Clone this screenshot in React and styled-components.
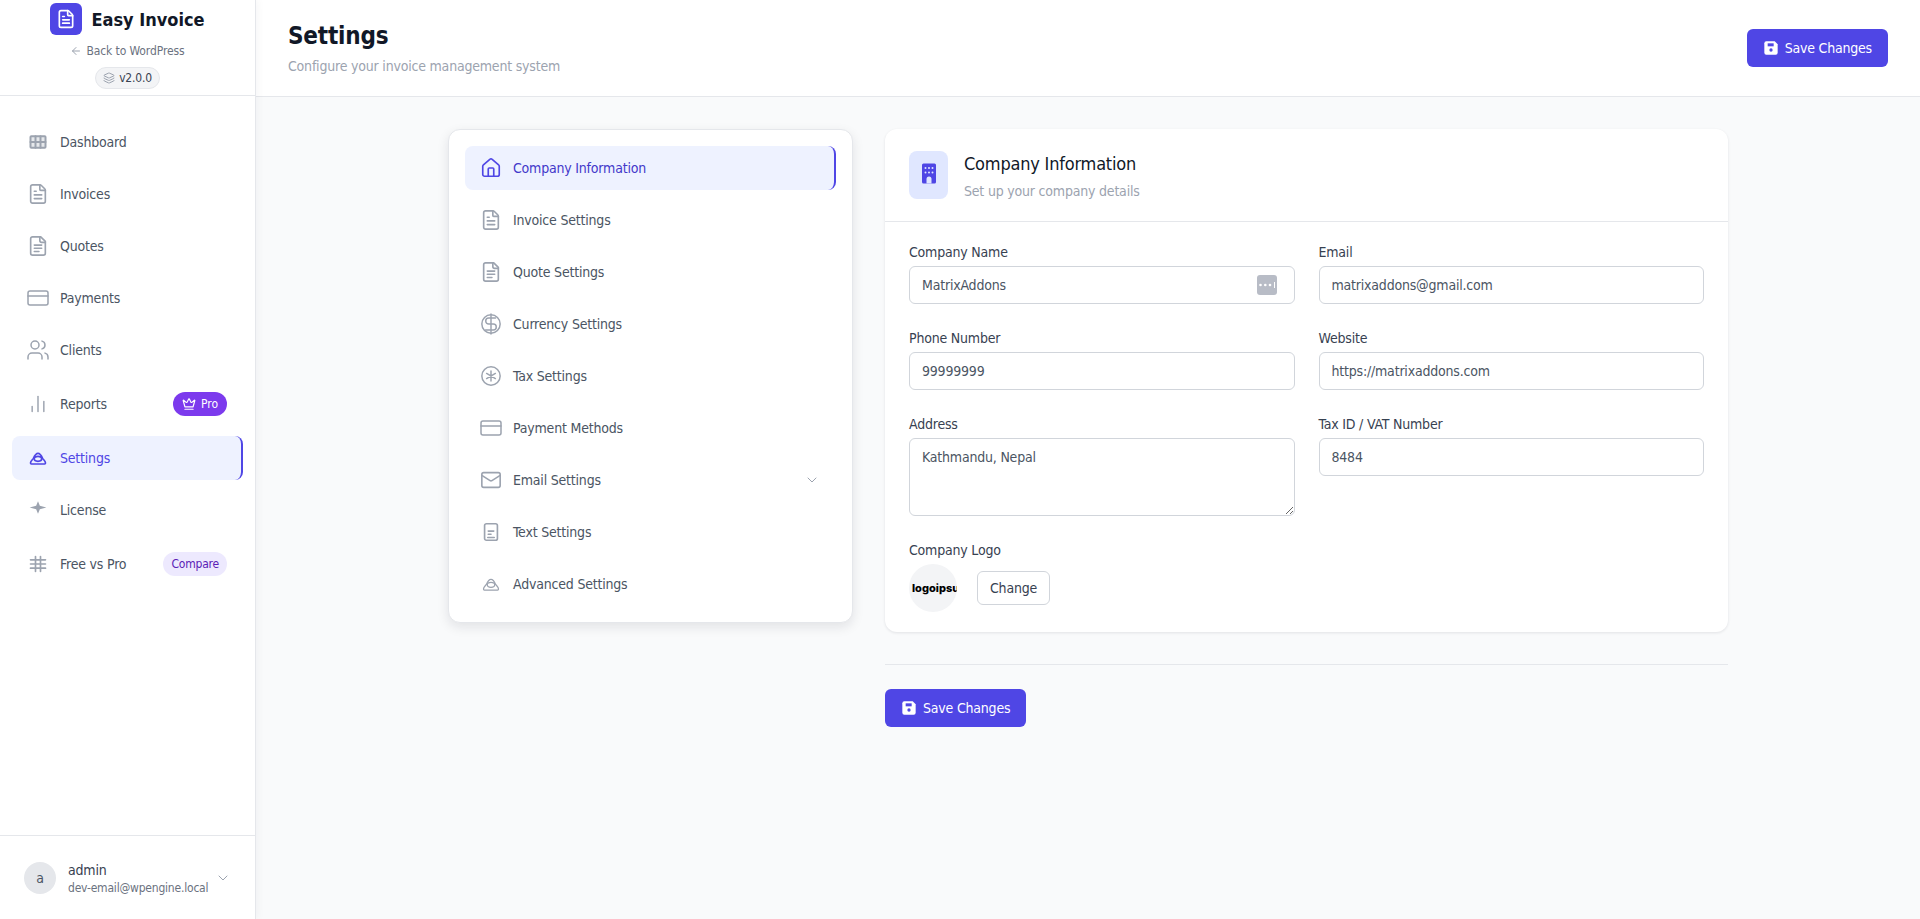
import React from 'react';
import styled, { createGlobalStyle } from 'styled-components';
import {
  ArrowLeft,
  ChartNoAxesColumn,
  ChevronDown,
  CreditCard,
  Crown,
  FileText,
  House,
  Layers,
  Mail,
  Users,
} from 'lucide-react';

const fontStack = '"DejaVu Sans Condensed", "DejaVu Sans", "Liberation Sans", sans-serif';

const GlobalStyle = createGlobalStyle`
  * { box-sizing: border-box; }
  html, body { margin: 0; padding: 0; height: 100%; }
  body {
    font-family: ${fontStack};
    font-stretch: condensed;
    font-size: 14px;
    letter-spacing: -0.2px;
    color: #374151;
    background: #f9fafb;
    overflow: hidden;
  }
  button, input, textarea {
    font-family: ${fontStack};
    font-stretch: condensed;
    font-size: 14px;
    letter-spacing: -0.2px;
  }
`;

const Page = styled.div`
  display: flex;
  height: 919px;
  overflow: hidden;
`;

const Sidebar = styled.aside`
  position: relative;
  z-index: 2;
  flex: 0 0 256px;
  min-width: 0;
  display: flex;
  flex-direction: column;
  background: #fff;
  border-right: 1px solid #e5e7eb;
  box-shadow: 2px 0 8px rgba(17, 24, 39, 0.04);
`;

const Brand = styled.div`
  height: 96px;
  padding-top: 3px;
  border-bottom: 1px solid #e5e7eb;
  display: flex;
  flex-direction: column;
  align-items: center;
`;

const BrandRow = styled.div`
  display: flex;
  align-items: center;
  gap: 9px;
`;

const LogoBox = styled.div`
  width: 32px;
  height: 32px;
  border-radius: 6px;
  background: #4f46e5;
  color: #fff;
  display: flex;
  align-items: center;
  justify-content: center;
`;

const BrandName = styled.div`
  font-size: 18px;
  font-weight: 700;
  letter-spacing: 0;
  color: #111827;
`;

const BackLink = styled.a`
  margin-top: 8px;
  display: flex;
  align-items: center;
  gap: 4px;
  font-size: 12px;
  line-height: 16px;
  letter-spacing: -0.1px;
  color: #6b7280;
  svg { color: #9ca3af; }
`;

const Version = styled.div`
  margin-top: 8px;
  height: 22px;
  padding: 0 7px;
  display: flex;
  align-items: center;
  gap: 4px;
  font-size: 12px;
  color: #374151;
  background: #f3f4f6;
  border: 1px solid #e5e7eb;
  border-radius: 999px;
  svg { color: #9ca3af; }
`;

const Nav = styled.nav`
  flex: 1;
  padding: 24px 12px;
  display: flex;
  flex-direction: column;
  gap: 8px;
`;

const MenuItem = styled.a`
  display: flex;
  align-items: center;
  gap: 12px;
  padding: 12px 16px;
  line-height: 20px;
  font-size: 14px;
  border-radius: 8px;
  color: ${(p) => (p.$active ? p.$accent : '#4b5563')};
  background: ${(p) => (p.$active ? '#eef2ff' : 'transparent')};
  border-right: ${(p) => (p.$active ? '2px solid #4f46e5' : '0')};
`;

const IconSlot = styled.span`
  flex: 0 0 20px;
  width: 20px;
  min-width: 0;
  height: 20px;
  display: flex;
  align-items: center;
  justify-content: center;
  color: ${(p) => (p.$active ? '#4f46e5' : '#9ca3af')};
  svg { flex-shrink: 0; }
`;

const MenuLabel = styled.span`
  flex: 1;
`;

const ProBadge = styled.span`
  height: 24px;
  padding: 0 9px;
  display: flex;
  align-items: center;
  gap: 5px;
  border-radius: 999px;
  font-size: 12px;
  letter-spacing: 0;
  color: #fff;
  background: #7c3aed;
`;

const CompareBadge = styled.span`
  height: 24px;
  padding: 0 8px;
  display: flex;
  align-items: center;
  border-radius: 999px;
  font-size: 12px;
  color: #5b21b6;
  background: #ede9fe;
`;

const UserBar = styled.div`
  height: 84px;
  padding: 0 24px;
  border-top: 1px solid #e5e7eb;
  display: flex;
  align-items: center;
  gap: 12px;
  svg { color: #9ca3af; flex-shrink: 0; }
`;

const Avatar = styled.div`
  flex: 0 0 32px;
  height: 32px;
  border-radius: 50%;
  background: #e5e7eb;
  color: #4b5563;
  display: flex;
  align-items: center;
  justify-content: center;
`;

const UserText = styled.div`
  flex: 1;
  min-width: 0;
  white-space: nowrap;
`;

const UserName = styled.div`
  font-size: 14px;
  line-height: 20px;
  color: #374151;
`;

const UserEmail = styled.div`
  font-size: 12px;
  line-height: 16px;
  color: #6b7280;
`;

const Content = styled.div`
  flex: 1;
  min-width: 0;
  display: flex;
  flex-direction: column;
`;

const Header = styled.header`
  height: 97px;
  padding: 0 32px;
  display: flex;
  align-items: center;
  justify-content: space-between;
  background: #fff;
  border-bottom: 1px solid #e5e7eb;
`;

const PageTitle = styled.h1`
  margin: 0;
  font-size: 24px;
  line-height: 32px;
  font-weight: 700;
  color: #111827;
`;

const PageSub = styled.p`
  margin: 4px 0 0;
  font-size: 14px;
  line-height: 20px;
  color: #9ca3af;
`;

const SaveButton = styled.button`
  height: 38px;
  padding: 0 16px;
  display: inline-flex;
  align-items: center;
  gap: 6px;
  border: 0;
  border-radius: 6px;
  background: #4f46e5;
  color: #fff;
`;

const Main = styled.main`
  flex: 1;
  padding: 32px 0;
`;

const Columns = styled.div`
  width: 1280px;
  margin: 0 auto;
  display: grid;
  grid-template-columns: 405px 1fr;
  gap: 32px;
  align-items: start;
`;

const SideCard = styled.div`
  padding: 16px;
  display: flex;
  flex-direction: column;
  gap: 8px;
  background: #fff;
  border: 1px solid #e5e7eb;
  border-radius: 12px;
  box-shadow: 0 4px 12px rgba(17, 24, 39, 0.1);
`;

const Card = styled.section`
  background: #fff;
  border-radius: 12px;
  box-shadow: 0 1px 3px rgba(17, 24, 39, 0.1);
`;

const CardHead = styled.div`
  padding: 20px 24px;
  display: flex;
  align-items: center;
  gap: 16px;
  border-bottom: 1px solid #e5e7eb;
`;

const HeadIcon = styled.div`
  flex: 0 0 39px;
  height: 48px;
  border-radius: 8px;
  background: #e0e7ff;
  display: flex;
  align-items: center;
  justify-content: center;
`;

const CardTitle = styled.h2`
  margin: 0;
  padding-top: 1px;
  font-size: 18px;
  line-height: 28px;
  font-weight: 400;
  color: #111827;
`;

const CardSub = styled.p`
  margin: 3px 0 0;
  font-size: 14px;
  line-height: 20px;
  color: #9ca3af;
`;

const FormGrid = styled.div`
  padding: 20px 24px;
  display: grid;
  grid-template-columns: 1fr 1fr;
  gap: 24px;
`;

const Field = styled.label`
  display: flex;
  flex-direction: column;
  gap: 4px;
  position: relative;
`;

const FieldLabel = styled.span`
  font-size: 14px;
  line-height: 20px;
  color: #374151;
`;

const TextInput = styled.input`
  height: 38px;
  width: 100%;
  padding: 0 12px;
  border: 1px solid #d1d5db;
  border-radius: 6px;
  background: #fff;
  color: #4b5563;
`;

const TextArea = styled.textarea`
  display: block;
  height: 78px;
  width: 100%;
  padding: 8px 12px;
  border: 1px solid #d1d5db;
  border-radius: 6px;
  background: #fff;
  color: #4b5563;
  line-height: 20px;
`;

const KeyBadge = styled.span`
  position: absolute;
  right: 18px;
  bottom: 9px;
  width: 20px;
  height: 20px;
  border-radius: 3px;
  background: #b8bcc6;
  display: flex;
`;

const LogoField = styled.div`
  grid-column: 1 / -1;
  display: flex;
  flex-direction: column;
  gap: 4px;
`;

const LogoRow = styled.div`
  display: flex;
  align-items: center;
  gap: 20px;
`;

const LogoCircle = styled.div`
  width: 48px;
  height: 48px;
  border-radius: 50%;
  background: #f3f4f6;
  overflow: hidden;
  display: flex;
  align-items: center;
  white-space: nowrap;
  padding-left: 3px;
  font-family: Inter, sans-serif;
  font-size: 11px;
  font-weight: 800;
  letter-spacing: 0;
  color: #000;
`;

const ChangeButton = styled.button`
  height: 34px;
  padding: 0 12px;
  border: 1px solid #d1d5db;
  border-radius: 6px;
  background: #fff;
  color: #374151;
`;

const FormFooter = styled.div`
  margin-top: 32px;
  padding-top: 24px;
  border-top: 1px solid #e5e7eb;
`;

const icon = { width: 20, height: 20, viewBox: '0 0 24 24', fill: 'none', stroke: 'currentColor', strokeWidth: 2, strokeLinecap: 'round', strokeLinejoin: 'round' };

const GridIcon = () => (
  <svg {...icon} strokeWidth={2.4}>
    <rect x="3" y="5" width="18" height="14" rx="1" fill="currentColor" fillOpacity="0.25" />
    <path d="M9 5v14M15 5v14M3 12h18" />
  </svg>
);

const QuoteIcon = () => (
  <svg {...icon} width={22} height={22} strokeWidth={1.8}>
    <path d="M15 2H6a2 2 0 0 0-2 2v16a2 2 0 0 0 2 2h12a2 2 0 0 0 2-2V7Z" />
    <path d="M14 2v4a2 2 0 0 0 2 2h4M8 11h8M8 14.5h8M8 18h5" />
  </svg>
);

const DomeIcon = ({ weight = 2 }) => (
  <svg {...icon} strokeWidth={weight}>
    <path d="M3 18c0-2.5 2-3.5 3.5-5.5C8 9 9.5 6.5 12 6.5s4 2.5 5.5 6C19 14.5 21 15.5 21 18c0 .8-.5 1.2-1 1.2H4c-.5 0-1-.4-1-1.2Z" />
    <ellipse cx="12" cy="13" rx="4.5" ry="3" />
  </svg>
);

const SparkIcon = () => (
  <svg {...icon} fill="currentColor" stroke="none">
    <path d="M12 1.5l2.2 5.3L22 9l-7.800 2.200L12 16.500l-2.200-5.300L2 9l7.800-2.200Z" />
  </svg>
);

const DoubleHashIcon = () => (
  <svg {...icon}>
    <path d="M9 3v18M15 3v18M3 7h18M3 12h18M3 17h18" />
  </svg>
);

const DollarCircleIcon = () => (
  <svg {...icon} width={22} height={22} strokeWidth={1.6}>
    <circle cx="12" cy="12" r="10" />
    <path d="M12 1v22M17 5.5H9.5a3.25 3.25 0 0 0 0 6.5h5a3.25 3.25 0 0 1 0 6.5H6" />
  </svg>
);

const AsteriskCircleIcon = () => (
  <svg {...icon} width={22} height={22} strokeWidth={1.6}>
    <circle cx="12" cy="12" r="10" />
    <path d="M12 6.5v11M7.2 9.2l9.6 5.6M16.8 9.2l-9.6 5.6" />
  </svg>
);

const TextFileIcon = () => (
  <svg {...icon} width={22} height={22} strokeWidth={1.8}>
    <rect x="5" y="3" width="14" height="18" rx="2" />
    <path d="M9 11h6M9 14.5h3M8.5 18h7" />
  </svg>
);

const BuildingIcon = () => (
  <svg width="24" height="24" viewBox="0 0 24 24">
    <rect x="5" y="0.5" width="14" height="20" rx="1.5" fill="#4f46e5" />
    {[5, 9.5].map((y) => [8.5, 12, 15.5].map((x) => <circle key={`${x}-${y}`} cx={x} cy={y} r="1" fill="#e0e7ff" />))}
    <path d="M9.5 20.5V16a2.5 2.5 0 0 1 5 0v4.5Z" fill="#e0e7ff" />
  </svg>
);

const SaveIcon = () => (
  <svg width="16" height="16" viewBox="0 0 24 24">
    <path d="M5 2h12.5L22 6.5V19a3 3 0 0 1-3 3H5a3 3 0 0 1-3-3V5a3 3 0 0 1 3-3Z" fill="#fff" />
    <rect x="7" y="5" width="9" height="4.5" fill="#4f46e5" />
    <circle cx="12" cy="15" r="2.5" fill="#4f46e5" />
  </svg>
);

const DotsIcon = () => (
  <svg width="20" height="20" viewBox="0 0 20 20">
    <circle cx="3.5" cy="10" r="1.3" fill="#fff" />
    <circle cx="8.3" cy="10" r="1.3" fill="#fff" />
    <circle cx="13" cy="10" r="1.3" fill="#fff" />
    <rect x="17" y="7" width="1" height="6" fill="#fff" />
  </svg>
);

const mainMenu = [
  { label: 'Dashboard', icon: <GridIcon /> },
  { label: 'Invoices', icon: <FileText size={22} strokeWidth={1.8} /> },
  { label: 'Quotes', icon: <QuoteIcon /> },
  { label: 'Payments', icon: <CreditCard size={24} strokeWidth={1.5} /> },
  { label: 'Clients', icon: <Users size={24} strokeWidth={1.5} /> },
  { label: 'Reports', icon: <ChartNoAxesColumn size={20} strokeWidth={1.75} />, badge: 'pro' },
  { label: 'Settings', icon: <DomeIcon />, active: true },
  { label: 'License', icon: <SparkIcon /> },
  { label: 'Free vs Pro', icon: <DoubleHashIcon />, badge: 'compare' },
];

const settingsMenu = [
  { label: 'Company Information', icon: <House size={22} strokeWidth={1.8} />, active: true },
  { label: 'Invoice Settings', icon: <FileText size={22} strokeWidth={1.8} /> },
  { label: 'Quote Settings', icon: <QuoteIcon /> },
  { label: 'Currency Settings', icon: <DollarCircleIcon /> },
  { label: 'Tax Settings', icon: <AsteriskCircleIcon /> },
  { label: 'Payment Methods', icon: <CreditCard size={24} strokeWidth={1.5} /> },
  { label: 'Email Settings', icon: <Mail size={22} strokeWidth={1.75} />, chevron: true },
  { label: 'Text Settings', icon: <TextFileIcon /> },
  { label: 'Advanced Settings', icon: <DomeIcon weight={1.5} /> },
];

function MenuRow({ item, accent = '#4f46e5' }) {
  return (
    <MenuItem $active={item.active} $accent={accent}>
      <IconSlot $active={item.active}>{item.icon}</IconSlot>
      <MenuLabel>{item.label}</MenuLabel>
      {item.badge === 'pro' && (
        <ProBadge>
          <Crown size={14} />
          Pro
        </ProBadge>
      )}
      {item.badge === 'compare' && <CompareBadge>Compare</CompareBadge>}
      {item.chevron && <ChevronDown size={16} strokeWidth={1.5} color="#9ca3af" />}
    </MenuItem>
  );
}

function App() {
  return (
    <Page>
      <GlobalStyle />
      <Sidebar>
        <Brand>
          <BrandRow>
            <LogoBox>
              <FileText size={20} />
            </LogoBox>
            <BrandName>Easy Invoice</BrandName>
          </BrandRow>
          <BackLink>
            <ArrowLeft size={12} />
            Back to WordPress
          </BackLink>
          <Version>
            <Layers size={12} />
            v2.0.0
          </Version>
        </Brand>
        <Nav>
          {mainMenu.map((item) => (
            <MenuRow key={item.label} item={item} />
          ))}
        </Nav>
        <UserBar>
          <Avatar>a</Avatar>
          <UserText>
            <UserName>admin</UserName>
            <UserEmail>dev-email@wpengine.local</UserEmail>
          </UserText>
          <ChevronDown size={16} strokeWidth={1.5} />
        </UserBar>
      </Sidebar>

      <Content>
        <Header>
          <div>
            <PageTitle>Settings</PageTitle>
            <PageSub>Configure your invoice management system</PageSub>
          </div>
          <SaveButton>
            <SaveIcon />
            Save Changes
          </SaveButton>
        </Header>

        <Main>
          <Columns>
            <SideCard>
              {settingsMenu.map((item) => (
                <MenuRow key={item.label} item={item} accent="#4338ca" />
              ))}
            </SideCard>

            <div>
              <Card>
                <CardHead>
                  <HeadIcon>
                    <BuildingIcon />
                  </HeadIcon>
                  <div>
                    <CardTitle>Company Information</CardTitle>
                    <CardSub>Set up your company details</CardSub>
                  </div>
                </CardHead>
                <FormGrid>
                  <Field>
                    <FieldLabel>Company Name</FieldLabel>
                    <TextInput defaultValue="MatrixAddons" />
                    <KeyBadge>
                      <DotsIcon />
                    </KeyBadge>
                  </Field>
                  <Field>
                    <FieldLabel>Email</FieldLabel>
                    <TextInput defaultValue="matrixaddons@gmail.com" />
                  </Field>
                  <Field>
                    <FieldLabel>Phone Number</FieldLabel>
                    <TextInput defaultValue="99999999" />
                  </Field>
                  <Field>
                    <FieldLabel>Website</FieldLabel>
                    <TextInput defaultValue="https://matrixaddons.com" />
                  </Field>
                  <Field>
                    <FieldLabel>Address</FieldLabel>
                    <TextArea defaultValue="Kathmandu, Nepal" />
                  </Field>
                  <Field>
                    <FieldLabel>Tax ID / VAT Number</FieldLabel>
                    <TextInput defaultValue="8484" />
                  </Field>
                  <LogoField>
                    <FieldLabel>Company Logo</FieldLabel>
                    <LogoRow>
                      <LogoCircle>logoipsum</LogoCircle>
                      <ChangeButton>Change</ChangeButton>
                    </LogoRow>
                  </LogoField>
                </FormGrid>
              </Card>
              <FormFooter>
                <SaveButton>
                  <SaveIcon />
                  Save Changes
                </SaveButton>
              </FormFooter>
            </div>
          </Columns>
        </Main>
      </Content>
    </Page>
  );
}

export default App;
